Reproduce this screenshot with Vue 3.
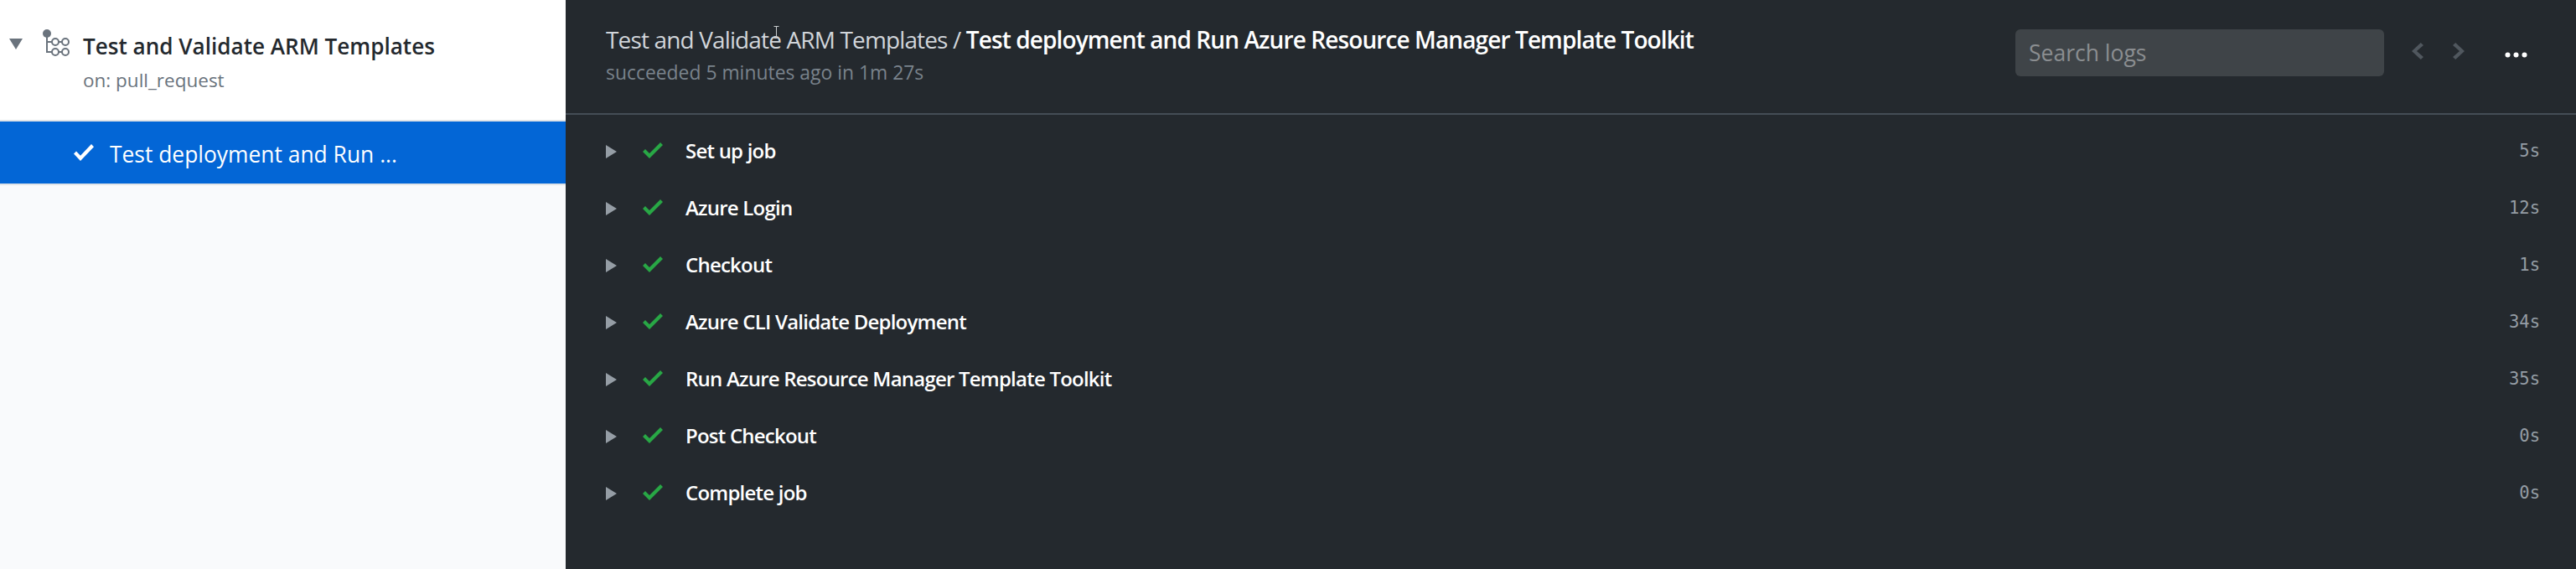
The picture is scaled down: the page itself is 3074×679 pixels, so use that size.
<script setup>
const steps = [
  { name: 'Set up job', time: '5s' },
  { name: 'Azure Login', time: '12s' },
  { name: 'Checkout', time: '1s' },
  { name: 'Azure CLI Validate Deployment', time: '34s' },
  { name: 'Run Azure Resource Manager Template Toolkit', time: '35s' },
  { name: 'Post Checkout', time: '0s' },
  { name: 'Complete job', time: '0s' },
]
</script>

<template>
  <div class="page">
    <aside class="sidebar">
      <div class="workflow">
        <svg class="tri-down" width="16" height="13" viewBox="0 0 16 13"><path d="M0 0h16L8 13z" /></svg>
        <svg class="wf-icon" width="32" height="34" viewBox="0 0 32 34" fill="none">
          <circle cx="5" cy="5" r="5" fill="#6a737d" />
          <path d="M5 8v19h6M5 15h6" stroke="#6a737d" stroke-width="2" />
          <g stroke="#6a737d" stroke-width="2">
            <circle cx="15" cy="15" r="4" /><circle cx="27" cy="15" r="4" />
            <circle cx="15" cy="27" r="4" /><circle cx="27" cy="27" r="4" />
            <path d="M19 15h4M19 27h4" />
          </g>
        </svg>
        <div class="wf-text">
          <div class="wf-title">Test and Validate ARM Templates</div>
          <div class="wf-sub">on: pull_request</div>
        </div>
      </div>
      <div class="job">
        <svg class="job-check" width="24" height="20" viewBox="0 3.5 12 9.5" preserveAspectRatio="none"><path d="M12 5l-8 8-4-4 1.5-1.5L4 10l6.5-6.5L12 5z" /></svg>
        <span class="job-name">Test deployment and Run ...</span>
      </div>
    </aside>

    <main class="main">
      <header class="head">
        <div class="head-text">
          <div class="crumb">Test and Validate ARM Templates / <strong>Test deployment and Run Azure Resource Manager Template Toolkit</strong></div>
          <div class="status">succeeded 5 minutes ago in 1m 27s</div>
        </div>
        <div class="tools">
          <input class="search" placeholder="Search logs" />
          <svg class="chev first" width="14" height="20" viewBox="0.5 3 6.5 10" preserveAspectRatio="none"><path d="M5.5 3L7 4.5 3.25 8 7 11.5 5.5 13l-5-5 5-5z" /></svg>
          <svg class="chev second" width="14" height="20" viewBox="1 3 6.5 10" preserveAspectRatio="none"><path d="M7.5 8l-5 5L1 11.5 4.75 8 1 4.5 2.5 3l5 5z" /></svg>
          <svg class="dots" width="27" height="7" viewBox="0 0 27 7"><circle cx="3.5" cy="3.5" r="3" /><circle cx="13.5" cy="3.5" r="3" /><circle cx="23.5" cy="3.5" r="3" /></svg>
        </div>
      </header>

      <ul class="steps">
        <li v-for="s in steps" :key="s.name" class="step">
          <span class="arrow-col"><svg width="13" height="16" viewBox="0 0 13 16"><path d="M0 0l13 8L0 16z" /></svg></span>
          <span class="check-col"><svg width="24" height="19" viewBox="0 3.5 12 9.5" preserveAspectRatio="none"><path d="M12 5l-8 8-4-4 1.5-1.5L4 10l6.5-6.5L12 5z" /></svg></span>
          <span class="step-name">{{ s.name }}</span>
          <span class="step-time">{{ s.time }}</span>
        </li>
      </ul>

      <svg class="cursor" width="7" height="15" viewBox="0 0 7 15" fill="none"><path d="M0.5 0.5h6M3.5 0.5v14M0.5 14.5h6" stroke="#c9ccce" /></svg>
    </main>
  </div>
</template>

<style>
html, body { margin: 0; background: #24292e; }
</style>

<style scoped>
.page {
  display: flex;
  width: 3074px;
  height: 679px;
  overflow: hidden;
  font-family: "Open Sans", "Noto Sans", sans-serif;
}
.sidebar {
  flex: 0 0 675px;
  background: #f9fafc;
}
.workflow {
  display: flex;
  align-items: flex-start;
  box-sizing: border-box;
  height: 145px;
  padding: 35px 0 0 11px;
  background: #fff;
  border-bottom: 2px solid #e1e4e8;
}
.tri-down { margin-top: 11px; fill: #6a737d; }
.wf-icon { margin-left: 24px; }
.wf-text { margin-left: 16px; white-space: nowrap; }
.wf-title {
  font-size: 26.1px;
  line-height: 40px;
  font-weight: 600;
  color: #24292e;
}
.wf-sub {
  margin-top: 3px;
  font-size: 22.5px;
  line-height: 36px;
  color: #6a737d;
}
.job {
  display: flex;
  align-items: center;
  box-sizing: content-box;
  height: 74px;
  padding-left: 88px;
  background: #0366d6;
  border-bottom: 2px solid #e1e4e8;
}
.job-check { fill: #fff; margin-right: 19px; }
.job-name {
  padding-top: 3px;
  font-size: 26.4px;
  color: #fff;
  white-space: nowrap;
}
.main {
  position: relative;
  flex: 1;
  background: #24292e;
}
.head {
  display: flex;
  align-items: flex-start;
  box-sizing: content-box;
  height: 135px;
  padding-left: 48px;
  border-bottom: 2px solid #444d56;
}
.head-text { padding-top: 26px; white-space: nowrap; }
.crumb {
  font-size: 28px;
  line-height: 42px;
  letter-spacing: -0.86px;
  color: #d1d5da;
}
.crumb strong { font-weight: 600; letter-spacing: -0.9px; color: #fff; }
.status {
  font-size: 22.9px;
  line-height: 38px;
  color: #7a838c;
}
.tools {
  display: flex;
  align-items: center;
  margin-left: auto;
  padding: 35px 58px 0 0;
}
.search {
  box-sizing: border-box;
  width: 440px;
  height: 56px;
  padding: 0 16px;
  border: 0;
  border-radius: 6px;
  outline: 0;
  background: #3f4448;
  font: 26.5px "Open Sans", sans-serif;
  color: #fff;
}
.search::placeholder { color: #8b8e91; opacity: 1; }
.chev { fill: #50575e; margin-bottom: 4px; }
.chev.first { margin-left: 33px; }
.chev.second { margin-left: 35px; }
.dots { fill: #fff; margin: 4px 0 0 48px; }
.steps {
  list-style: none;
  margin: 0;
  padding: 10px 45px 0 48px;
}
.step {
  display: flex;
  align-items: center;
  height: 68px;
}
.arrow-col { display: flex; flex: 0 0 44px; fill: #959da5; }
.check-col { display: flex; flex: 0 0 51px; fill: #28a745; margin-bottom: 3px; }
.step-name {
  padding-bottom: 3px;
  font-size: 24px;
  font-weight: 600;
  letter-spacing: -0.78px;
  color: #fff;
  white-space: nowrap;
}
.step-time {
  margin: 0 -2px 3px auto;
  font-family: "DejaVu Sans Mono", monospace;
  font-size: 20.5px;
  color: #959da5;
}
.cursor { position: absolute; left: 248px; top: 31px; }
</style>
